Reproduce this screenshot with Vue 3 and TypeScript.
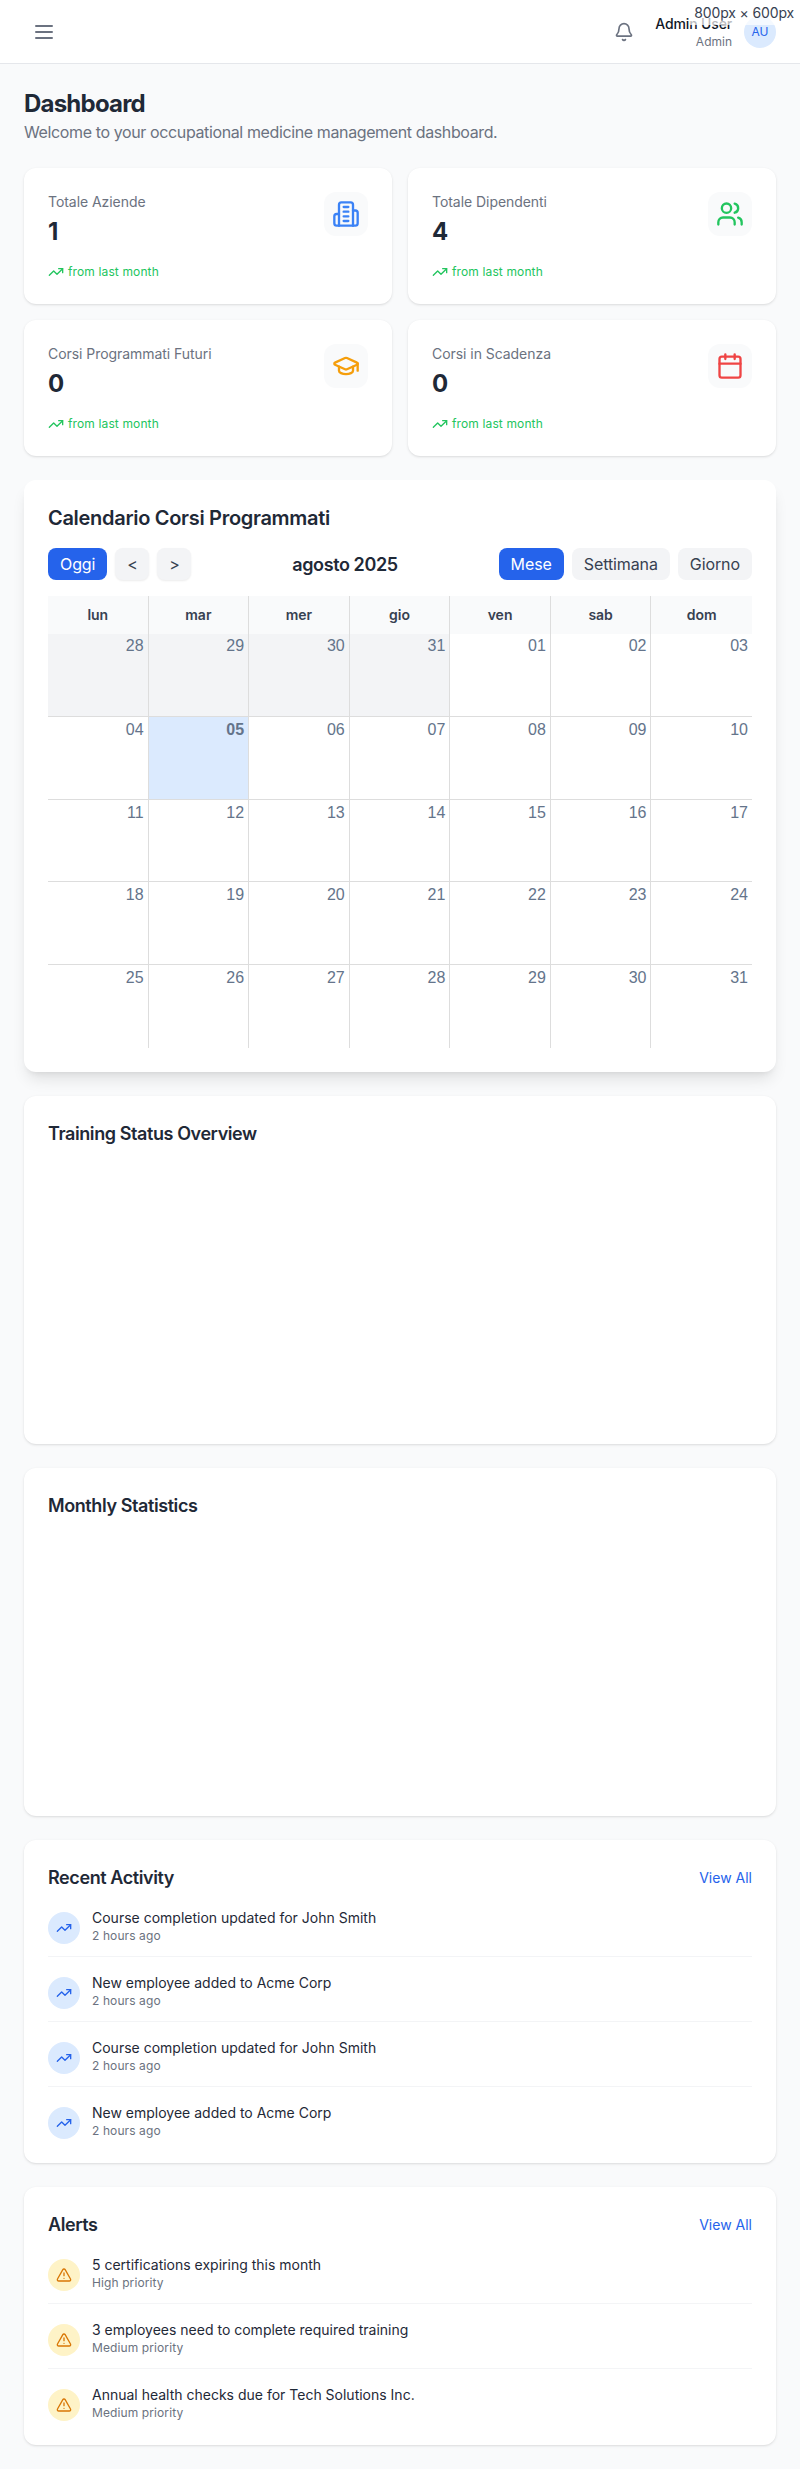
<script setup lang="ts">
const stats = [
  { label: 'Totale Aziende', value: '1', icon: 'building', color: '#3b82f6' },
  { label: 'Totale Dipendenti', value: '4', icon: 'users', color: '#22c55e' },
  { label: 'Corsi Programmati Futuri', value: '0', icon: 'cap', color: '#f59e0b' },
  { label: 'Corsi in Scadenza', value: '0', icon: 'calendar', color: '#ef4444' },
]
const weekdays = ['lun', 'mar', 'mer', 'gio', 'ven', 'sab', 'dom']
const pad = (n: number) => String(n).padStart(2, '0')
const prev = [28, 29, 30, 31].map((d) => ({ label: String(d), other: true, today: false }))
const cur = Array.from({ length: 31 }, (_, i) => ({ label: pad(i + 1), other: false, today: i + 1 === 5 }))
const days = [...prev, ...cur]
const activities = [
  { title: 'Course completion updated for John Smith', sub: '2 hours ago' },
  { title: 'New employee added to Acme Corp', sub: '2 hours ago' },
  { title: 'Course completion updated for John Smith', sub: '2 hours ago' },
  { title: 'New employee added to Acme Corp', sub: '2 hours ago' },
]
const alerts = [
  { title: '5 certifications expiring this month', sub: 'High priority' },
  { title: '3 employees need to complete required training', sub: 'Medium priority' },
  { title: 'Annual health checks due for Tech Solutions Inc.', sub: 'Medium priority' },
]
</script>

<template>
  <div class="page">
    <header class="topbar">
      <svg class="menu" width="24" height="24" viewBox="0 0 24 24" fill="none" stroke="#6b7280" stroke-width="2" stroke-linecap="round" stroke-linejoin="round">
        <path d="M4 6h16M4 12h16M4 18h16" />
      </svg>
      <div class="top-right">
        <svg class="bell" width="20" height="20" viewBox="0 0 24 24" fill="none" stroke="#6b7280" stroke-width="2" stroke-linecap="round" stroke-linejoin="round">
          <path d="M10.268 21a2 2 0 0 0 3.464 0" />
          <path d="M3.262 15.326A1 1 0 0 0 4 17h16a1 1 0 0 0 .74-1.673C19.41 13.956 18 12.499 18 8A6 6 0 0 0 6 8c0 4.499-1.411 5.956-2.738 7.326" />
        </svg>
        <div class="user">
          <div class="user-name">Admin User</div>
          <div class="user-role">Admin</div>
        </div>
        <div class="avatar">AU</div>
      </div>
    </header>
    <div class="size-tag">800px × 600px</div>

    <main class="main">
      <h1 class="title">Dashboard</h1>
      <p class="subtitle">Welcome to your occupational medicine management dashboard.</p>

      <section class="stats">
        <article v-for="s in stats" :key="s.label" class="stat card">
          <div class="stat-top">
            <div>
              <div class="stat-label">{{ s.label }}</div>
              <div class="stat-value">{{ s.value }}</div>
            </div>
            <div class="stat-icon" :style="{ color: s.color }">
              <svg width="28" height="28" viewBox="0 0 24 24" fill="none" stroke="currentColor" stroke-width="2" stroke-linecap="round" stroke-linejoin="round">
                <template v-if="s.icon === 'building'">
                  <path d="M6 22V4a2 2 0 0 1 2-2h8a2 2 0 0 1 2 2v18Z" />
                  <path d="M6 12H4a2 2 0 0 0-2 2v6a2 2 0 0 0 2 2h2" />
                  <path d="M18 9h2a2 2 0 0 1 2 2v9a2 2 0 0 1-2 2h-2" />
                  <path d="M10 6h4M10 10h4M10 14h4M10 18h4" />
                </template>
                <template v-else-if="s.icon === 'users'">
                  <path d="M16 21v-2a4 4 0 0 0-4-4H6a4 4 0 0 0-4 4v2" />
                  <circle cx="9" cy="7" r="4" />
                  <path d="M22 21v-2a4 4 0 0 0-3-3.87" />
                  <path d="M16 3.13a4 4 0 0 1 0 7.75" />
                </template>
                <template v-else-if="s.icon === 'cap'">
                  <path d="M21.42 10.922a1 1 0 0 0-.019-1.838L12.83 5.18a2 2 0 0 0-1.66 0L2.6 9.08a1 1 0 0 0 0 1.832l8.57 3.908a2 2 0 0 0 1.66 0z" />
                  <path d="M22 10v6" />
                  <path d="M6 12.5V16a6 3 0 0 0 12 0v-3.5" />
                </template>
                <template v-else>
                  <rect x="3" y="4" width="18" height="18" rx="2" />
                  <path d="M16 2v4M8 2v4M3 10h18" />
                </template>
              </svg>
            </div>
          </div>
          <div class="trend">
            <svg width="16" height="16" viewBox="0 0 24 24" fill="none" stroke="#22c55e" stroke-width="2" stroke-linecap="round" stroke-linejoin="round">
              <path d="m22 7-8.5 8.5-5-5L2 17" />
              <path d="M16 7h6v6" />
            </svg>
            <span>from last month</span>
          </div>
        </article>
      </section>

      <section class="card calendar">
        <h2 class="cal-title">Calendario Corsi Programmati</h2>
        <div class="toolbar">
          <div class="btn-group">
            <button class="btn primary">Oggi</button>
            <button class="btn nav">&lt;</button>
            <button class="btn nav">&gt;</button>
          </div>
          <div class="month">agosto 2025</div>
          <div class="btn-group">
            <button class="btn primary">Mese</button>
            <button class="btn">Settimana</button>
            <button class="btn">Giorno</button>
          </div>
        </div>
        <div class="cal-head">
          <div v-for="w in weekdays" :key="w" class="cal-head-cell">{{ w }}</div>
        </div>
        <div class="cal-body">
          <div
            v-for="(d, i) in days"
            :key="i"
            class="cal-cell"
            :class="{ other: d.other, today: d.today }"
          >{{ d.label }}</div>
        </div>
      </section>

      <section class="card chart">
        <h2 class="section-title">Training Status Overview</h2>
      </section>
      <section class="card chart">
        <h2 class="section-title">Monthly Statistics</h2>
      </section>

      <section class="card list-card">
        <div class="list-head">
          <h2 class="section-title">Recent Activity</h2>
          <a class="view-all">View All</a>
        </div>
        <div v-for="(a, i) in activities" :key="i" class="row">
          <div class="round blue">
            <svg width="16" height="16" viewBox="0 0 24 24" fill="none" stroke="#2563eb" stroke-width="2" stroke-linecap="round" stroke-linejoin="round">
              <path d="m22 7-8.5 8.5-5-5L2 17" />
              <path d="M16 7h6v6" />
            </svg>
          </div>
          <div>
            <div class="row-title">{{ a.title }}</div>
            <div class="row-sub">{{ a.sub }}</div>
          </div>
        </div>
      </section>

      <section class="card list-card">
        <div class="list-head">
          <h2 class="section-title">Alerts</h2>
          <a class="view-all">View All</a>
        </div>
        <div v-for="(a, i) in alerts" :key="i" class="row">
          <div class="round amber">
            <svg width="16" height="16" viewBox="0 0 24 24" fill="none" stroke="#d97706" stroke-width="2" stroke-linecap="round" stroke-linejoin="round">
              <path d="m21.73 18-8-14a2 2 0 0 0-3.48 0l-8 14A2 2 0 0 0 4 21h16a2 2 0 0 0 1.73-3" />
              <path d="M12 9v4M12 17h.01" />
            </svg>
          </div>
          <div>
            <div class="row-title">{{ a.title }}</div>
            <div class="row-sub">{{ a.sub }}</div>
          </div>
        </div>
      </section>
    </main>
  </div>
</template>

<style>
html, body { margin: 0; background: #f9fafb; }
</style>

<style scoped>
.page { position: relative; background: #f9fafb; font-family: Inter, "Noto Sans", sans-serif; color: #1f2937; }
.topbar { height: 63px; background: #fff; border-bottom: 1px solid #e5e7eb; display: flex; align-items: center; justify-content: space-between; padding: 0 24px 0 32px; }
.top-right { display: flex; align-items: center; }
.bell { margin-right: 21px; }
.user { text-align: right; margin-right: 12px; }
.user-name { font-size: 14px; line-height: 20px; font-weight: 500; letter-spacing: -0.15px; color: #111827; }
.user-role { font-size: 12px; line-height: 16px; color: #6b7280; }
.avatar { width: 32px; height: 32px; border-radius: 50%; background: #dbeafe; color: #2563eb; font-size: 12px; font-weight: 400; display: flex; align-items: center; justify-content: center; }
.size-tag { position: absolute; top: 0; right: 0; padding: 4px 6px 4px 4px; font-size: 14px; line-height: 17px; letter-spacing: -0.15px; color: #374151; background: rgba(255,255,255,.7); }
.main { padding: 24px; }
.title { margin: 0; font-size: 24px; line-height: 32px; font-weight: 700; letter-spacing: -0.78px; color: #1f2937; }
.subtitle { margin: 0 0 24px; font-size: 16px; line-height: 24px; letter-spacing: -0.38px; color: #6b7280; }
.card { background: #fff; border-radius: 12px; box-shadow: 0 1px 3px rgba(0,0,0,.1), 0 1px 2px -1px rgba(0,0,0,.1); }
.stats { display: grid; grid-template-columns: 1fr 1fr; gap: 16px; margin-bottom: 24px; }
.stat { height: 136px; box-sizing: border-box; padding: 24px; display: flex; flex-direction: column; }
.stat-top { display: flex; justify-content: space-between; align-items: flex-start; }
.stat-label { font-size: 14px; line-height: 20px; letter-spacing: -0.05px; color: #6b7280; }
.stat-value { font-size: 24px; line-height: 32px; font-weight: 700; color: #1f2937; margin-top: 4px; }
.stat-icon { width: 44px; height: 44px; border-radius: 12px; background: #f9fafb; display: flex; align-items: center; justify-content: center; }
.trend { margin-top: auto; display: flex; align-items: center; gap: 4px; font-size: 12px; line-height: 16px; letter-spacing: 0.13px; color: #22c55e; }
.calendar { padding: 24px; margin-bottom: 24px; box-shadow: 0 10px 15px -3px rgba(0,0,0,.1), 0 4px 6px -4px rgba(0,0,0,.1); }
.cal-title { margin: 0 0 16px; font-size: 20px; line-height: 28px; font-weight: 600; letter-spacing: -0.3px; color: #1f2937; }
.toolbar { display: flex; align-items: center; justify-content: space-between; margin-bottom: 16px; }
.btn-group { display: flex; gap: 8px; }
.btn { height: 32px; padding: 0 12px; border: 0; border-radius: 8px; background: #f3f4f6; color: #374151; font: 400 16px/32px Inter, sans-serif; letter-spacing: -0.1px; }
.btn.primary { background: #2563eb; color: #fff; }
.btn.nav { letter-spacing: -0.6px; box-shadow: 0 1px 2px rgba(0,0,0,.08); }
.month { font-size: 18px; font-weight: 600; letter-spacing: -0.4px; color: #1f2937; }
.cal-head { display: grid; grid-template-columns: repeat(7, 1fr); background: #f9fafb; }
.cal-head-cell { height: 38px; line-height: 38px; text-align: center; font-size: 14px; font-weight: 600; color: #374151; border-right: 1px solid #ddd; }
.cal-head-cell:last-child { border-right: 0; }
.cal-body { display: grid; grid-template-columns: repeat(7, 1fr); grid-auto-rows: 82.8px; }
.cal-cell { box-sizing: border-box; padding: 0 4px; text-align: right; font: 16px/24px "Liberation Sans", Arial, sans-serif; color: #64748b; border-right: 1px solid #ddd; border-bottom: 1px solid #ddd; }
.cal-cell:nth-child(n+8) { padding-top: 1px; }
.cal-cell:nth-child(7n) { border-right: 0; }
.cal-cell:nth-last-child(-n+7) { border-bottom: 0; }
.cal-cell.other { background: #f3f4f6; }
.cal-cell.today { background: #dbeafe; font-weight: 700; }
.chart { height: 348px; box-sizing: border-box; padding: 24px; margin-bottom: 24px; }
.section-title { margin: 0; font-size: 18px; line-height: 28px; font-weight: 600; letter-spacing: -0.41px; color: #1f2937; }
.list-card { padding: 24px; margin-bottom: 24px; }
.list-card:last-child { margin-bottom: 0; }
.list-head { display: flex; justify-content: space-between; align-items: center; margin-bottom: 16px; }
.view-all { font-size: 14px; color: #2563eb; }
.row { display: flex; align-items: flex-start; gap: 12px; padding-bottom: 12px; margin-bottom: 16px; border-bottom: 1px solid #f3f4f6; }
.row:last-child { padding-bottom: 0; margin-bottom: 0; border-bottom: 0; }
.round { width: 32px; height: 32px; margin-top: 4px; border-radius: 50%; display: flex; align-items: center; justify-content: center; flex-shrink: 0; }
.round.blue { background: #dbeafe; }
.round.amber { background: #fef3c7; }
.row-title { font-size: 14px; line-height: 20px; color: #1f2937; }
.row-sub { font-size: 12px; line-height: 16px; letter-spacing: 0.1px; color: #6b7280; }
</style>
